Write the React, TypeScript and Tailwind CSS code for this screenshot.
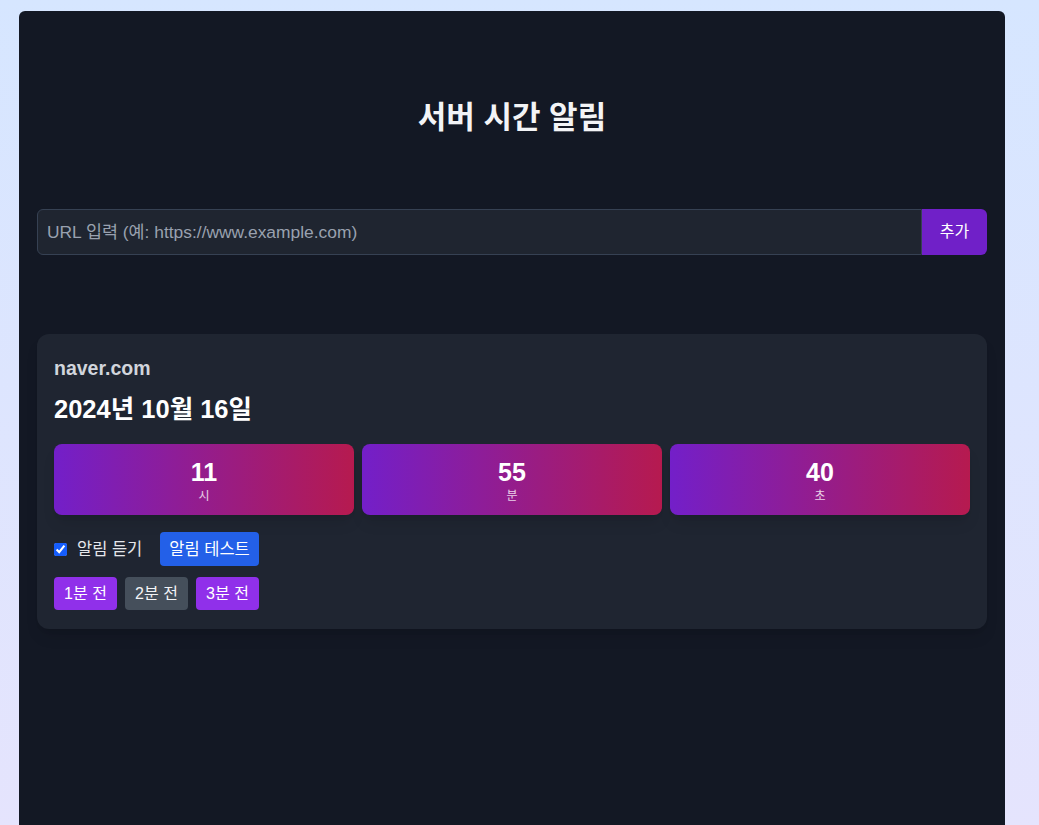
import React, { useState } from 'react';

const font = { fontFamily: '"Liberation Sans", "Noto Sans CJK KR", sans-serif' };

function TimeBox({ value, label }: { value: string; label: string }) {
  return (
    <div className="flex h-[71px] flex-col items-center justify-center rounded-lg bg-[linear-gradient(to_right,#731fc9,#b61a4f)] shadow-lg">
      <span className="text-[25px] font-bold leading-8 text-white">{value}</span>
      <span className="text-xs leading-4 text-white/80">{label}</span>
    </div>
  );
}

export default function App() {
  const [sound, setSound] = useState(true);

  return (
    <div
      className="min-h-screen bg-gradient-to-b from-[#d6e6ff] to-[#e5e4fd] pl-[19px] pt-[11px]"
      style={font}
    >
      <div className="min-h-[814px] w-[986px] rounded-t-md bg-[#131824] px-[18px] pt-[89px]">
        {/* Title */}
        <h1 className="text-center text-[31px] font-bold leading-9 text-gray-100">서버 시간 알림</h1>

        {/* URL input */}
        <div className="mt-[73px] flex h-[46px]">
          <input
            type="text"
            placeholder="URL 입력 (예: https://www.example.com)"
            className="flex-1 rounded-l-md border border-gray-700 bg-[#1f2530] px-[9px] text-[17.4px] text-gray-200 placeholder:text-gray-400 outline-none"
          />
          <button className="w-[65px] rounded-r-md bg-[#7020c8] text-base text-white">추가</button>
        </div>

        {/* Site card */}
        <div className="mt-[79px] rounded-xl bg-[#1f2531] px-[17px] pb-[19px] pt-[20px] shadow-lg">
          <h2 className="text-[19.5px] font-bold leading-7 text-gray-300">naver.com</h2>
          <p className="mt-[11px] text-[25.5px] font-bold leading-8 text-white">2024년 10월 16일</p>

          <div className="mt-[19px] grid grid-cols-3 gap-2">
            <TimeBox value="11" label="시" />
            <TimeBox value="55" label="분" />
            <TimeBox value="40" label="초" />
          </div>

          <div className="mt-[17px] flex items-center">
            <label className="flex items-center gap-[10px] text-[16.5px] text-gray-200">
              <input
                type="checkbox"
                checked={sound}
                onChange={(e) => setSound(e.target.checked)}
                className="h-[13px] w-[13px] accent-blue-600"
              />
              알림 듣기
            </label>
            <button className="ml-[18px] h-[34px] rounded bg-[#2360e8] px-[9px] text-[16.5px] text-white">알림 테스트</button>
          </div>

          <div className="mt-[11px] flex gap-2">
            <button className="h-[33px] w-[63px] rounded bg-[#9030ea] text-base text-white">1분 전</button>
            <button className="h-[33px] w-[63px] rounded bg-[#454f5b] text-base text-gray-100">2분 전</button>
            <button className="h-[33px] w-[63px] rounded bg-[#9030ea] text-base text-white">3분 전</button>
          </div>
        </div>
      </div>
    </div>
  );
}
